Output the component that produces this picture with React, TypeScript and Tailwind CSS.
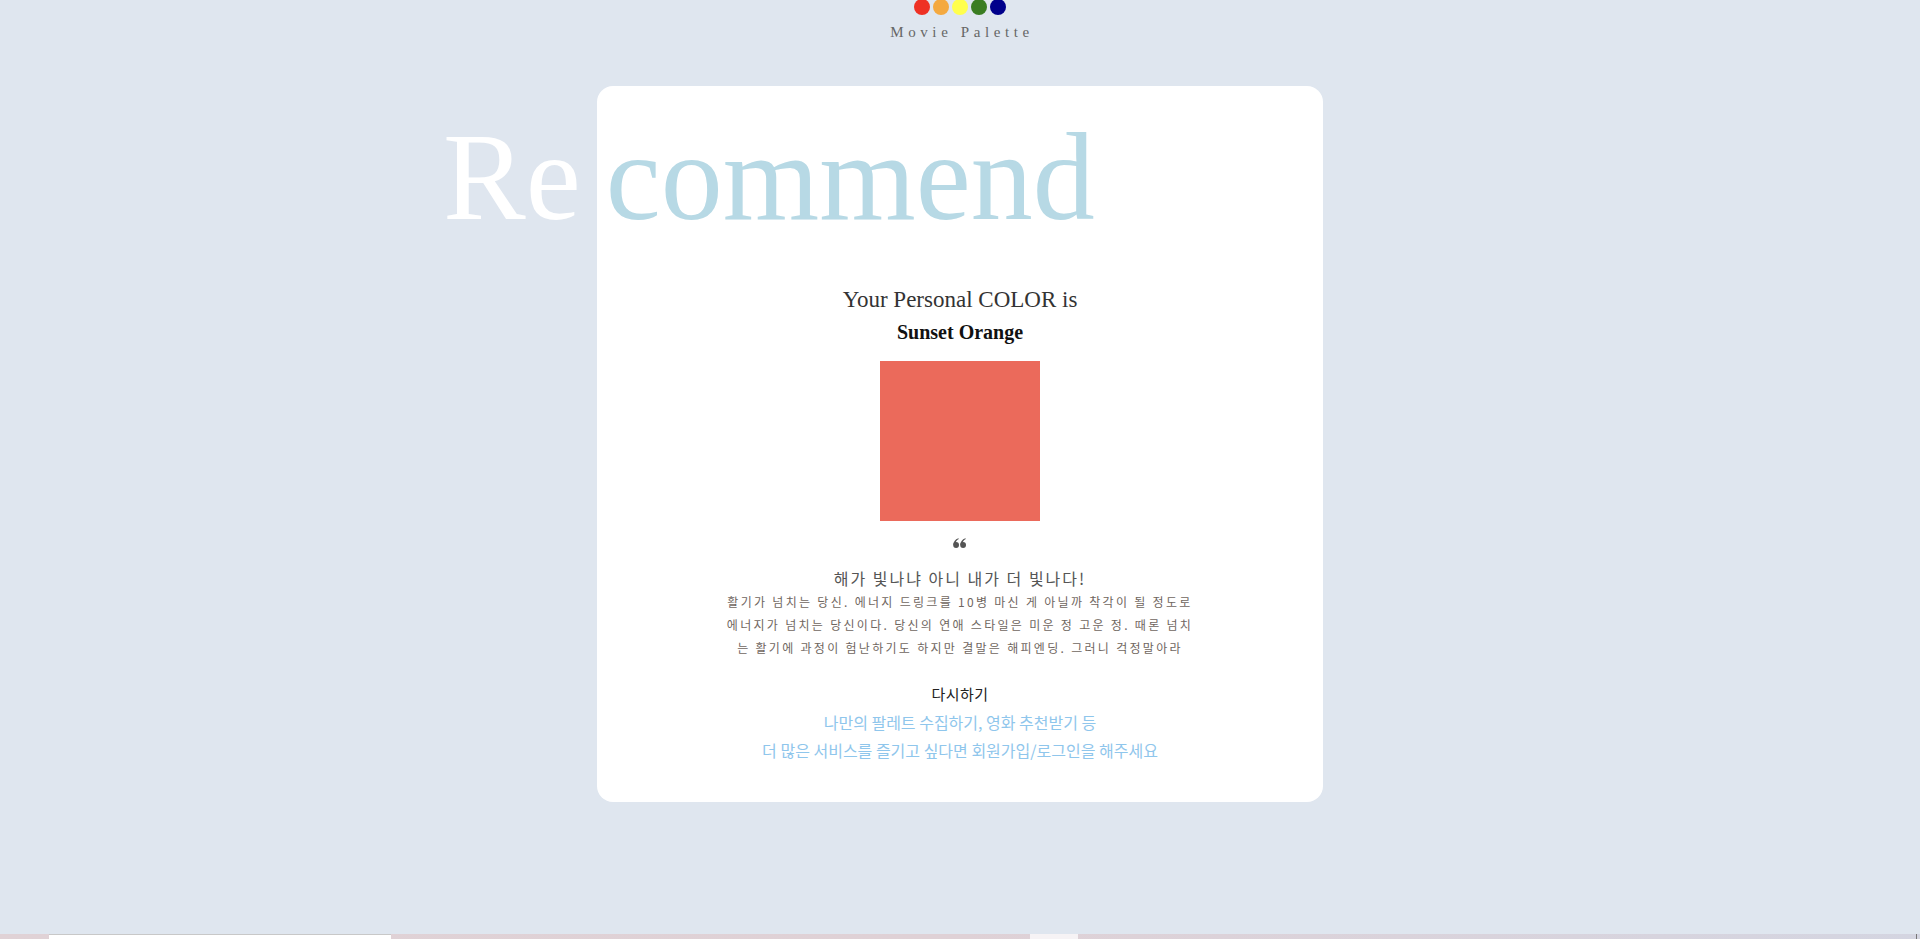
import React from "react";

const serif = "font-['Liberation_Serif','Times_New_Roman',serif]";
const kr = "font-['Noto_Sans_CJK_KR','Noto_Sans',sans-serif]";

function QuoteIcon() {
  return (
    <svg width="14" height="10" viewBox="0 0 14 10" className="block">
      <g fill="#555">
        <circle cx="3.1" cy="7" r="2.9" />
        <path d="M0.3 7 C0.3 3.8 2.1 1.4 5.4 0.2 L5.8 1.1 C3.9 2 2.9 3.3 2.7 5.2 Z" />
        <circle cx="10.1" cy="7" r="2.9" />
        <path d="M7.3 7 C7.3 3.8 9.1 1.4 12.4 0.2 L12.8 1.1 C10.9 2 9.9 3.3 9.7 5.2 Z" />
      </g>
    </svg>
  );
}

export default function App() {
  const dots = ["bg-[#ee3124]", "bg-[#f4a940]", "bg-[#ffff4d]", "bg-[#3a7d22]", "bg-[#00008b]"];
  return (
    <div className="w-full bg-[#dfe6ef] overflow-hidden">
      <div className="h-[934px] flex flex-col items-center">
        {/* header */}
        <div className="flex flex-col items-center">
          <div className="flex gap-[3px] -mt-px">
            {dots.map((c, i) => (
              <div key={i} className={`w-4 h-4 rounded-full ${c}`} />
            ))}
          </div>
          <div className={`${serif} mt-[8px] text-[15px] leading-[18px] tracking-[4.6px] pl-[4px] text-[#666]`}>
            Movie Palette
          </div>
        </div>

        {/* card */}
        <div className="relative mt-[45px] w-[726px] h-[716px] bg-white rounded-2xl">
          <div
            className={`${serif} absolute left-[-154px] top-[30px] text-[124px] leading-none whitespace-nowrap flex`}
          >
            <span className="text-white">Re</span>
            <span className="text-[#b7d9e5] ml-[25px]">commend</span>
          </div>

          <div className="flex flex-col items-center pt-[200px]">
            <div className={`${serif} text-[23px] leading-[27px] text-[#333]`}>Your Personal COLOR is</div>
            <div className={`${serif} mt-[7px] text-[20px] leading-[24px] font-bold text-[#111]`}>Sunset Orange</div>
            <div className="mt-[17px] w-[160px] h-[160px] bg-[#eb6a5b]" />
            <div className="mt-[17px] h-[10px] flex items-center">
              <QuoteIcon />
            </div>
            <div className={`${kr} mt-[20px] text-[16px] leading-[20px] tracking-[2px] text-[#555]`}>
              해가 빛나냐 아니 내가 더 빛나다!
            </div>
            <div className={`${kr} mt-[2px] text-[12px] leading-[23px] tracking-[2.3px] text-[#6f6660] text-center whitespace-nowrap`}>
              <div>활기가 넘치는 당신. 에너지 드링크를 10병 마신 게 아닐까 착각이 될 정도로</div>
              <div>에너지가 넘치는 당신이다. 당신의 연애 스타일은 미운 정 고운 정. 때론 넘치</div>
              <div>는 활기에 과정이 험난하기도 하지만 결말은 해피엔딩. 그러니 걱정말아라</div>
            </div>
            <button className={`${kr} mt-[25px] text-[15px] leading-[20px] tracking-[0.5px] text-[#222] cursor-pointer`}>다시하기</button>
            <div className={`${kr} mt-[4px] text-[16px] leading-[28px] text-[#8fc6ec] text-center`}>
              <div>나만의 팔레트 수집하기, 영화 추천받기 등</div>
              <div>더 많은 서비스를 즐기고 싶다면 회원가입/로그인을 해주세요</div>
            </div>
          </div>
        </div>
      </div>

      {/* next section peeking in */}
      <div className="flex h-[40px] bg-gradient-to-r from-[#e0d2d6] via-[#dfd1d6] to-[#d4d5e1]">
        <div className="w-[49px]" />
        <div className="w-[342px] bg-white border-t border-[#c8c8c8]" />
        <div className="w-[639px]" />
        <div className="w-[48px] bg-[#f6f3f5]" />
        <div className="flex-1" />
        <div className="w-px bg-[#777]" />
        <div className="w-[3px]" />
      </div>
    </div>
  );
}
